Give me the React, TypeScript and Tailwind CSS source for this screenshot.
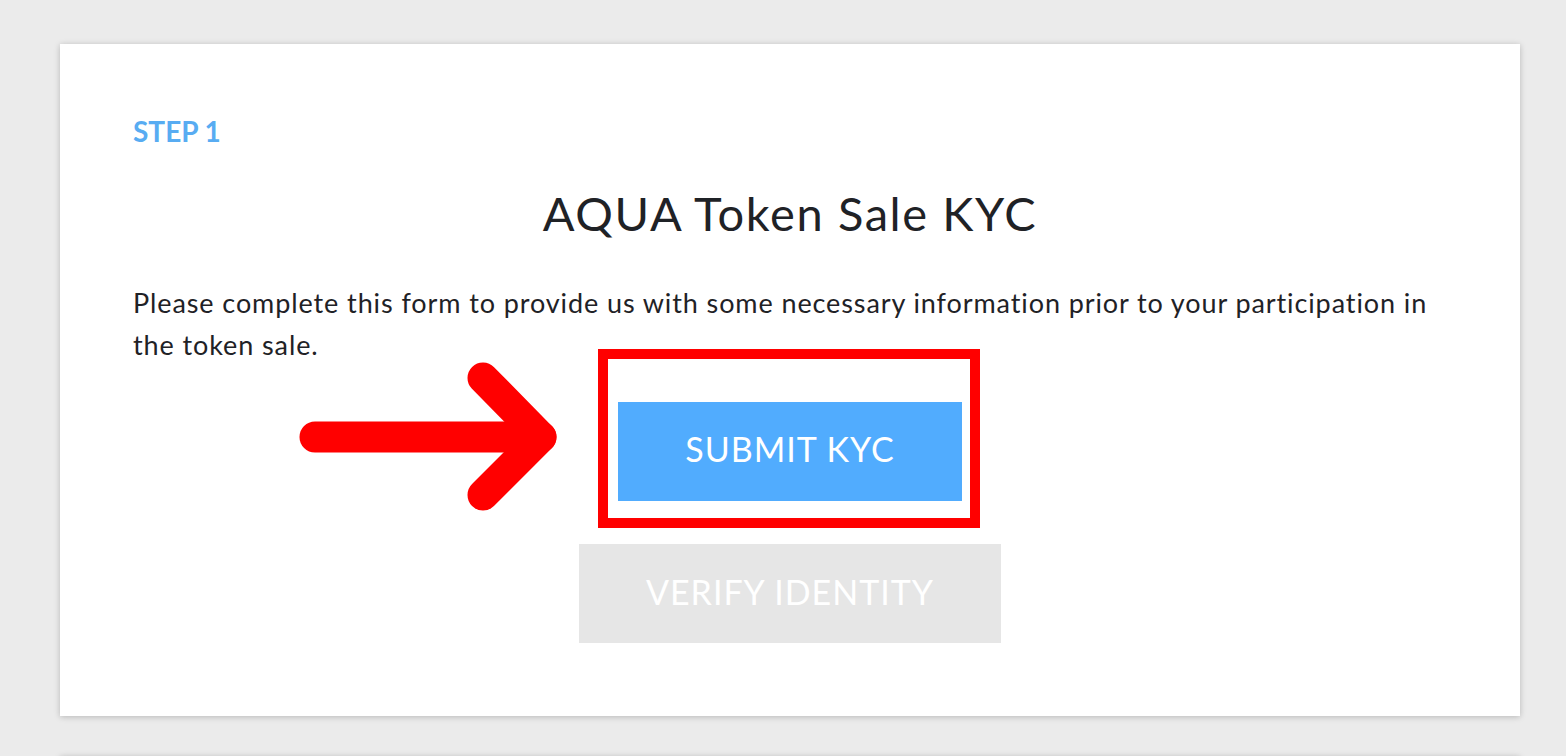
export default function App() {
  return (
    <div
      className="h-screen w-full bg-[#ebebeb] overflow-hidden"
      style={{ fontFamily: "Lato, 'Open Sans', sans-serif" }}
    >
      <div className="pl-[60px] pr-[46px] pt-[44px]">
        <div className="relative bg-white shadow-[0_1px_6px_rgba(0,0,0,0.22)] px-[73px] pt-[71px] pb-[73px]">
          <div className="text-[28px] leading-[1.2] font-bold text-[#58acf2]">
            STEP 1
          </div>
          <h1 className="mt-[36px] text-center text-[47px] leading-[1.2] tracking-[1.6px] text-[#1f2226]">
            AQUA Token Sale KYC
          </h1>
          <p className="mt-[41px] text-[27px] leading-[42px] tracking-[0.9px] text-[#1f2226]">
            Please complete this form to provide us with some necessary
            information prior to your participation in the token sale.
          </p>

          <div className="mt-[36px] flex flex-col items-center gap-[43px]">
            <div className="relative">
              <button className="w-[344px] h-[99px] pb-[5px] bg-[#51acfe] text-white text-[34px] tracking-[1px] flex items-center justify-center">
                SUBMIT KYC
              </button>
              {/* red annotation box */}
              <div className="absolute left-[-20px] top-[-53px] w-[382px] h-[179px] border-[10px] border-[#ff0000] pointer-events-none" />
            </div>
            <button className="w-[422px] h-[99px] pb-[4px] bg-[#e6e6e6] text-white text-[34px] tracking-[1px] flex items-center justify-center">
              VERIFY IDENTITY
            </button>
          </div>

          {/* red annotation arrow */}
          <svg
            className="absolute left-[200px] top-[300px] pointer-events-none"
            width="320"
            height="200"
            viewBox="0 0 320 200"
          >
            <g
              stroke="#ff0000"
              strokeWidth="31"
              strokeLinecap="round"
              strokeLinejoin="round"
              fill="none"
            >
              <line x1="55" y1="93" x2="281" y2="93" />
              <polyline points="223,34 281,93 223,151" />
            </g>
          </svg>
        </div>
        <div className="mt-[40px] h-[200px] bg-white shadow-[0_1px_6px_rgba(0,0,0,0.22)]" />
      </div>
    </div>
  );
}
